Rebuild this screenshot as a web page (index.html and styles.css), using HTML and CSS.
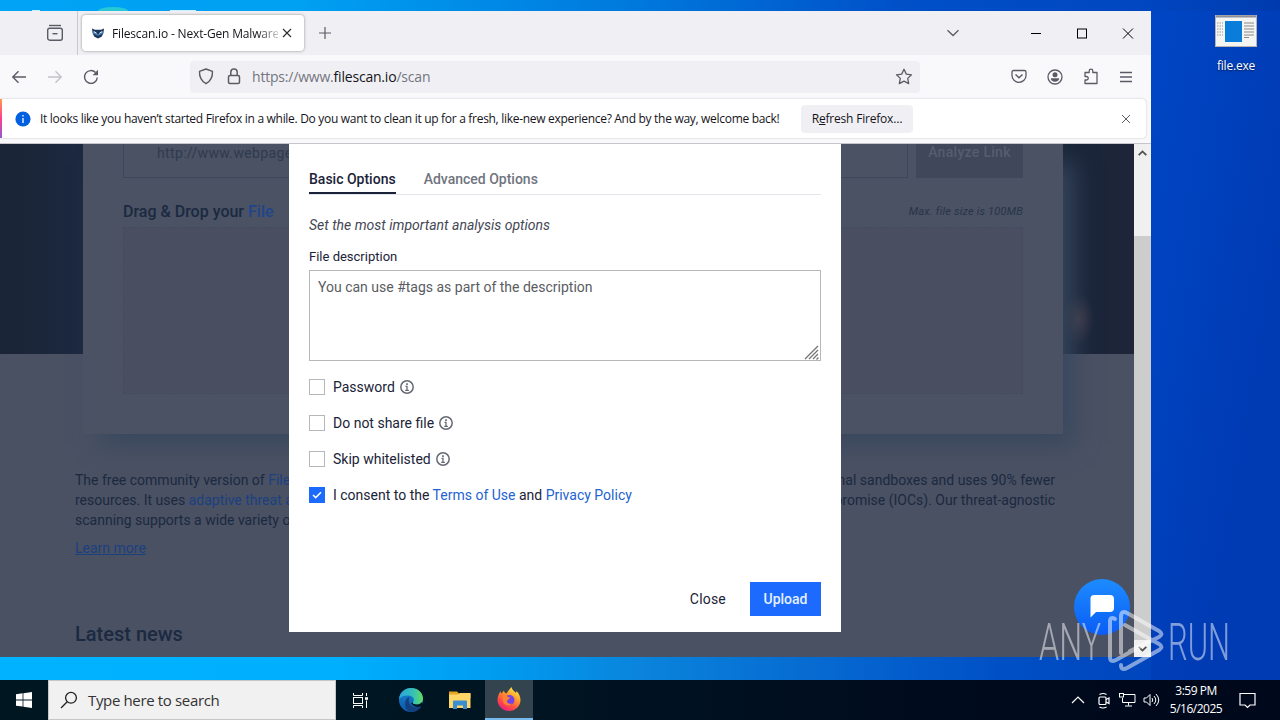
FILE: index.html
```html
<!DOCTYPE html>
<html lang="en">
<head>
    <meta charset="UTF-8">
    <meta name="viewport" content="width=device-width, initial-scale=1.0">
    <title>Filescan.io - Next-Gen Malware Analysis</title>
    <link rel="stylesheet" href="styles.css">
</head>
<body>
    <div class="desktop">
        <div class="peek peek-white"></div>
        <div class="peek peek-green"></div>
        <div class="peek peek-wide"></div>

        <div class="desktop-icon">
            <svg width="42" height="32" viewBox="0 0 42 32">
                <rect x="0.5" y="0.5" width="41" height="31" fill="#f4f4f2" stroke="#b9b4b0"/>
                <path d="M1 1.5h40" stroke="#8d8f98" stroke-width="2"/>
                <rect x="10" y="6" width="17" height="21" fill="#0a7ddb"/>
                <path d="M2 8h6M2 11h6M2 14h6M2 17h6M2 20h6" stroke="#9a9a9a" stroke-dasharray="1.5 1"/>
                <path d="M29 8h10M29 11h10M29 14h10M29 17h10M29 20h10M29 22.5h5" stroke="#8a8a8a"/>
            </svg>
            <span>file.exe</span>
        </div>

        <div class="window">
            <!-- Tab strip -->
            <div class="tab-bar">
                <div class="tab-view">
                    <svg width="18" height="18" viewBox="0 0 18 18" fill="none" stroke="#5b5b66" stroke-width="1.4">
                        <path d="M3 1.5h12"/>
                        <rect x="1.7" y="4.2" width="14.6" height="12" rx="2"/>
                        <path d="M6.5 9.7h5"/>
                    </svg>
                </div>
                <div class="tab">
                    <svg width="14" height="14" viewBox="0 0 14 14">
                        <path d="M1 2.5l3 1.3h6l3-1.3-.6 4.8-1.8 3.4L7 12.5l-3.6-1.8L1.6 7.3z" fill="#1d3557"/>
                        <path d="M1.6 4.5L7 8.5l5.4-4-.5 3L7 9.8 2.1 7.5z" fill="#4c86c6"/>
                        <path d="M3 5.6l2.6 1.6M11 5.6L8.4 7.2" stroke="#fff" stroke-width=".9"/>
                    </svg>
                    <span class="tab-title">Filescan.io - Next-Gen Malware</span>
                    <svg class="tab-close" width="10" height="10" viewBox="0 0 10 10" stroke="#2b2a33" stroke-width="1.1"><path d="M1 1l8 8M9 1l-8 8"/></svg>
                </div>
                <svg class="new-tab" width="14" height="14" viewBox="0 0 14 14" stroke="#5b5b66" stroke-width="1.2"><path d="M7 1v12M1 7h12"/></svg>
                <div class="window-buttons">
                    <svg class="tab-list" width="14" height="8" viewBox="0 0 14 8" fill="none" stroke="#5b5b66" stroke-width="1.3"><path d="M1.5 1.2L7 6.5l5.500-5.300"/></svg>
                    <svg width="46" height="11" viewBox="0 0 46 11" stroke="#000"><path d="M18 5.500h10"/></svg>
                    <svg width="46" height="11" viewBox="0 0 46 11" fill="none" stroke="#000"><rect x="18.500" y="1" width="9" height="9"/></svg>
                    <svg width="46" height="11" viewBox="0 0 46 11" stroke="#000"><path d="M18 .5l10 10M28 .5l-10 10"/></svg>
                </div>
            </div>

            <!-- Toolbar -->
            <div class="toolbar">
                <div class="nav-buttons">
                    <svg width="16" height="16" viewBox="0 0 16 16" fill="none" stroke="#5b5b66" stroke-width="1.4"><path d="M15 8H2M7.500 2.300L1.800 8l5.700 5.700"/></svg>
                    <svg width="16" height="16" viewBox="0 0 16 16" fill="none" stroke="#c3c3c9" stroke-width="1.400"><path d="M1 8h13M8.500 2.300L14.200 8l-5.700 5.700"/></svg>
                    <svg width="16" height="16" viewBox="0 0 16 16" fill="none" stroke="#5b5b66" stroke-width="1.400"><path d="M14.300 8.500A6.400 6.400 0 1 1 12.600 3.600"/><path d="M15 .8v5.400H9.600z" fill="#5b5b66" stroke="none"/></svg>
                </div>
                <div class="url-bar">
                    <svg width="16" height="17" viewBox="0 0 16 17" fill="none" stroke="#5b5b66" stroke-width="1.400"><path d="M8 1l6.500 2.300c.2 5.600-1.600 9.800-6.500 12.400C3.100 13.100 1.300 8.900 1.500 3.300z" stroke-linejoin="round"/></svg>
                    <svg width="14" height="17" viewBox="0 0 14 17" fill="none" stroke="#5b5b66" stroke-width="1.500"><rect x="1.500" y="7.500" width="11" height="8" rx="1.500"/><path d="M3.800 7.500V4.300a3.200 3.200 0 0 1 6.400 0v3.200"/></svg>
                    <span class="url">https://www.<b>filescan.io</b>/scan</span>
                    <svg width="18" height="17" viewBox="0 0 18 17" fill="none" stroke="#5b5b66" stroke-width="1.300" stroke-linejoin="round"><path d="M9 1.300l2.300 4.800 5.200.7-3.800 3.600 1 5.200L9 13.100l-4.700 2.500 1-5.200L1.500 6.800l5.200-.7z"/></svg>
                </div>
                <div class="tool-icons">
                    <svg width="16" height="15" viewBox="0 0 16 15" fill="none" stroke="#5b5b66" stroke-width="1.300"><path d="M2.500 1.500h11a1.500 1.500 0 0 1 1.500 1.500v3.500a7 6.800 0 0 1-14 0V3a1.500 1.500 0 0 1 1.500-1.500z"/><path d="M4.500 5.500L8 8.700l3.500-3.200" stroke-width="1.500"/></svg>
                    <svg width="16" height="16" viewBox="0 0 16 16" fill="none" stroke="#5b5b66" stroke-width="1.300"><circle cx="8" cy="8" r="7"/><circle cx="8" cy="5.700" r="2.500" fill="#5b5b66" stroke="none"/><path d="M3.800 9.300h8.400c0 2-1.800 3.500-4.200 3.500s-4.200-1.500-4.200-3.500z" fill="#5b5b66" stroke="none"/></svg>
                    <svg width="16" height="17" viewBox="0 0 16 17" fill="none" stroke="#5b5b66" stroke-width="1.300" stroke-linejoin="round"><path d="M2 6.500V4.500h4.200V3a1.800 1.800 0 0 1 3.600 0v1.500H14V15.500H2V12h1.500a1.500 1.500 0 0 0 0-3.500H2z"/></svg>
                    <svg width="14" height="12" viewBox="0 0 14 12" stroke="#5b5b66" stroke-width="1.300"><path d="M1 1.500h12M1 6h12M1 10.500h12"/></svg>
                </div>
            </div>

            <!-- Refresh notification -->
            <div class="notice">
                <svg width="16" height="16" viewBox="0 0 16 16"><circle cx="8" cy="8" r="7.600" fill="#0060df"/><path d="M8 7v5M8 4v1.600" stroke="#fff" stroke-width="1.300"/></svg>
                <span class="notice-text">It looks like you haven’t started Firefox in a while. Do you want to clean it up for a fresh, like-new experience? And by the way, welcome back!</span>
                <button class="notice-btn">R<u>e</u>fresh Firefox…</button>
                <svg class="notice-close" width="10" height="10" viewBox="0 0 10 10" stroke="#5b5b66"><path d="M1 1l8 8M9 1l-8 8"/></svg>
            </div>

            <!-- Web page -->
            <div class="viewport">
                <div class="page">
                    <div class="scan-card">
                        <div class="url-row">
                            <div class="link-input">http://www.webpage.com</div>
                            <div class="analyze-btn">Analyze Link</div>
                        </div>
                        <div class="drop-head">
                            <h2>Drag &amp; Drop your <span>File</span></h2>
                            <em>Max. file size is 100MB</em>
                        </div>
                        <div class="drop-zone"></div>
                    </div>
                    <div class="about">
                        <div class="about-row"><span class="about-first">The free community version of <a>Filescan.io</a></span><span class="about-end">traditional sandboxes and uses 90% fewer</span></div>
                        <div class="about-row"><span class="about-second">resources. It uses <a>adaptive threat analysis</a></span><span class="about-end2">Compromise (IOCs). Our threat-agnostic</span></div>
                        <div class="about-row"><span class="about-third">scanning supports a wide variety of files</span></div>
                        <a class="learn-more">Learn more</a>
                    </div>
                    <h3 class="news-title">Latest news</h3>
                </div>

                <div class="scrollbar">
                    <div class="scroll-btn"><svg width="9" height="6" viewBox="0 0 9 6" fill="none" stroke="#505050" stroke-width="1.800"><path d="M.7 5.200l3.800-3.800 3.800 3.800"/></svg></div>
                    <div class="scroll-thumb"></div>
                    <div class="scroll-btn"><svg width="9" height="6" viewBox="0 0 9 6" fill="none" stroke="#505050" stroke-width="1.800"><path d="M.7.8l3.800 3.800L8.300.8"/></svg></div>
                </div>

                <div class="chat-btn">
                    <svg width="26" height="26" viewBox="0 0 26 26"><path d="M5 2h16a4 4 0 0 1 4 4v9a4 4 0 0 1-4 4H7l-5.500 5.500V5.500A3.500 3.500 0 0 1 5 2z" fill="#fff"/></svg>
                </div>

                <!-- Upload options modal -->
                <div class="modal">
                    <div class="modal-tabs">
                        <div class="modal-tab active">Basic Options</div>
                        <div class="modal-tab second">Advanced Options</div>
                    </div>
                    <p class="hint">Set the most important analysis options</p>
                    <label class="field-label">File description</label>
                    <div class="description">
                        <span>You can use #tags as part of the description</span>
                        <svg width="15" height="15" viewBox="0 0 15 15" stroke="#777" stroke-width="1.400"><path d="M1 14L14 1M5 14l9-9M9 14l5-5M12.500 14.500l2-2"/></svg>
                    </div>
                    <div class="check-row">
                        <span class="box"></span><span class="t-password">Password</span>
                        <svg class="info" width="14" height="14" viewBox="0 0 14 14" fill="none" stroke="#666a73"><circle cx="7" cy="7" r="6.200" stroke-width="1.500"/><path d="M5.500 6.300H7v4M5.200 10.300h3.700" stroke-width="1.300"/><path d="M7 3.200v1.700" stroke-width="1.700"/></svg>
                    </div>
                    <div class="check-row">
                        <span class="box"></span><span class="t-share">Do not share file</span>
                        <svg class="info" width="14" height="14" viewBox="0 0 14 14" fill="none" stroke="#666a73"><circle cx="7" cy="7" r="6.200" stroke-width="1.500"/><path d="M5.500 6.300H7v4M5.200 10.300h3.700" stroke-width="1.300"/><path d="M7 3.200v1.700" stroke-width="1.700"/></svg>
                    </div>
                    <div class="check-row">
                        <span class="box"></span><span class="t-skip">Skip whitelisted</span>
                        <svg class="info" width="14" height="14" viewBox="0 0 14 14" fill="none" stroke="#666a73"><circle cx="7" cy="7" r="6.200" stroke-width="1.500"/><path d="M5.500 6.300H7v4M5.200 10.300h3.700" stroke-width="1.300"/><path d="M7 3.200v1.700" stroke-width="1.700"/></svg>
                    </div>
                    <div class="check-row">
                        <span class="box checked"><svg width="10" height="8" viewBox="0 0 10 8" fill="none" stroke="#fff" stroke-width="1.500"><path d="M1 4l2.700 2.600L9 1.200"/></svg></span>
                        <span class="t-consent">I consent to the <a>Terms of Use</a> and <a>Privacy Policy</a></span>
                    </div>
                    <div class="modal-actions">
                        <button class="btn-close">Close</button>
                        <button class="btn-upload">Upload</button>
                    </div>
                </div>
            </div>
        </div>

        <div class="watermark">
            <svg width="194" height="66" viewBox="0 0 194 66">
                <g fill="#fff" font-family="Roboto, sans-serif" font-weight="300" font-size="51">
                    <text x="1" y="53" textLength="62" lengthAdjust="spacingAndGlyphs">ANY</text>
                    <text x="130" y="53" textLength="62" lengthAdjust="spacingAndGlyphs">RUN</text>
                </g>
                <g fill="none" stroke="#fff" stroke-width="4" stroke-linejoin="round" stroke-linecap="round">
                    <path d="M77 12q-5-3-5 3v35q0 6 6 3l34-19"/>
                    <path d="M83 46V10q0-7 6-4l32 18q5 3 0 6L92 44"/>
                    <path d="M87 18l34 19q5 3 0 6L89 61q-6 3-6-3"/>
                </g>
            </svg>
        </div>

        <!-- Taskbar -->
        <div class="taskbar">
            <div class="start">
                <svg width="16" height="16" viewBox="0 0 16 16" fill="#fff"><path d="M0 2.200L6.600 1.300v6.200H0zM7.400 1.200L16 0v7.500H7.400zM0 8.400h6.600v6.200L0 13.700zM7.400 8.400H16V16l-8.600-1.200z"/></svg>
            </div>
            <div class="search">
                <svg width="18" height="18" viewBox="0 0 18 18" fill="none" stroke="#222" stroke-width="1.300"><circle cx="11" cy="6.800" r="5.400"/><path d="M7.200 10.800L1 17"/></svg>
                <span>Type here to search</span>
            </div>
            <div class="task task-view">
                <svg width="18" height="17" viewBox="0 0 18 17" fill="none" stroke="#fff"><path d="M1.500 1v2.500h9V1M1.500 16v-2.500h9V16"/><rect x="1.500" y="5.500" width="9" height="6"/><path d="M14.500 1v3M14.500 8.500V16" /><path d="M13 6.500h3" stroke-width="2.500"/></svg>
            </div>
            <div class="task">
                <svg width="24" height="24" viewBox="0 0 24 24">
                    <defs>
                        <linearGradient id="edge-top" x1="0" x2="1"><stop offset="0" stop-color="#2aa4dd"/><stop offset=".6" stop-color="#35c1b5"/><stop offset="1" stop-color="#64dc62"/></linearGradient>
                        <linearGradient id="edge-low" y1="0" y2="1" x2="0"><stop offset="0" stop-color="#1688d0"/><stop offset="1" stop-color="#0e57ab"/></linearGradient>
                    </defs>
                    <circle cx="12" cy="12" r="12" fill="url(#edge-low)"/>
                    <path d="M0 11C1 4 6 0 12 0c7 0 12 5 12 10.500 0 4-3 6-6.500 6-3 0-4-1-3.500-2 2.500-4-1-7-5-7-4 0-7 1-9 3.500z" fill="url(#edge-top)"/>
                    <path d="M10.500 9c-2 4 0 9 5 10 3 .5 5-.5 7-1.500-3 5-8 7-12 6C6 22 5 16 7 12c1-2 2-3 3.500-3z" fill="#15407f"/>
                    <path d="M14 14.500c-.5 1 .5 2 3.500 2 2 0 4-.8 5.400-2.300l1.100 2-1.500 2C17 20 13.500 18 12 15z" fill="#001722"/>
                </svg>
            </div>
            <div class="task">
                <svg width="22" height="20" viewBox="0 0 22 20">
                    <path d="M0 1.500h8l2 2h11.500V8H0z" fill="#e6a523"/>
                    <path d="M0 4.500h9l2-1.500h10.500v15H0z" fill="#ffd766"/>
                    <path d="M4 19v-7.500q0-1 1-1h12q1 0 1 1V19h-4v-3.500H8V19z" fill="#3b8ed0"/>
                </svg>
            </div>
            <div class="task task-active">
                <svg width="24" height="24" viewBox="0 0 24 24">
                    <defs>
                        <linearGradient id="fox" x1=".8" y1="0" x2=".2" y2="1"><stop offset="0" stop-color="#fff04f"/><stop offset=".35" stop-color="#ffa12b"/><stop offset=".7" stop-color="#ff4a45"/><stop offset="1" stop-color="#e5198a"/></linearGradient>
                    </defs>
                    <path d="M3.500 4c0 1 .3 2 1 2.500L7 3.500c0 1.500 1 2.500 2.500 3C11 4 13 2 14.500 0c.5 3 3 4 4.500 6l.5-2c2.500 2.500 4 6 4 9 0 6-5 11-11.500 11S.5 19 .5 13c0-4 1.500-6 3-9z" fill="url(#fox)"/>
                    <circle cx="12.500" cy="13" r="5" fill="#7542e5"/>
                    <path d="M5.500 9c2-1.500 4-1 5 .5 1 1 2 1 3 1-1 2-3 1.500-3.500 3.500-.3 2 2 3.500 5 2.500-2 3-7 2.500-8.500-.5-1-2-1-4.500-1-7z" fill="#ff8130"/>
                </svg>
            </div>
            <div class="tray">
                <svg width="14" height="8" viewBox="0 0 14 8" fill="none" stroke="#fff" stroke-width="1.200"><path d="M1 7l6-6 6 6"/></svg>
                <svg class="tray-cam" width="14" height="17" viewBox="0 0 14 17" fill="none" stroke="#fff" stroke-width="1.200"><rect x="2" y="5" width="7" height="7.500" rx="1"/><path d="M9 7.500l3-1.500v5.500L9 10M2.500 2.500q3.500-2 7 0M2.500 15q3.500 2 7 0"/></svg>
                <svg class="tray-net" width="17" height="14" viewBox="0 0 17 14" fill="none" stroke="#fff"><path d="M5 1.500h11v8H3.500V5M9.500 9.500v3M6 13h7"/><rect x=".5" y=".5" width="4" height="3.500"/></svg>
                <svg class="tray-vol" width="17" height="14" viewBox="0 0 17 14" fill="none" stroke="#fff"><path d="M1 5h2.500L7 1.500v11L3.500 9H1z"/><path d="M9 5q1.500 2 0 4M11 3q3.500 4 0 8M13 1q5.500 6 0 12"/></svg>
                <div class="clock"><span>3:59 PM</span><span>5/16/2025</span></div>
                <svg class="tray-note" width="17" height="17" viewBox="0 0 17 17" fill="none" stroke="#fff" stroke-width="1.200"><path d="M1 1.500h15v11.500h-5L8.500 15.500 6 13H1z"/></svg>
            </div>
        </div>
    </div>
</body>
</html>
```
FILE: styles.css
```css
:root {
    --ink: #1b2338;
    --blue: #1d6bfe;
    --link: #2463d1;
    --shade: #4a5163;
    --shade-ink: #1b2941;
    --shade-link: #1b4080;
    --ui: 'Open Sans', 'Noto Sans', sans-serif;
}

* {
    box-sizing: border-box;
}

body {
    margin: 0;
    font-family: Roboto, sans-serif;
    font-size: 14px;
    color: var(--ink);
}

button {
    border: 0;
    padding: 0;
    font: inherit;
    color: inherit;
    background: none;
}

svg {
    display: block;
    flex: none;
}

/* Desktop */
.desktop {
    position: relative;
    display: flex;
    flex-direction: column;
    justify-content: flex-end;
    width: 1280px;
    height: 720px;
    overflow: hidden;
    background:
        linear-gradient(90deg, #00a3f5 0, #00a0f3 300px, #0078dc 640px, #0050c8 900px, #0046c0 1150px, #003bae 1280px) 0 0 / 100% 11px no-repeat,
        linear-gradient(90deg, #00b2ff 0, #00b0ff 330px, #009bf0 500px, #0a84dc 640px, #0565cf 850px, #0050c5 1000px, #0045bd 1151px, transparent 1151px) 0 657px / 100% 23px no-repeat,
        linear-gradient(100deg, #0049c9 1100px, #003bb4 1300px);
}

.peek {
    position: absolute;
    top: 10px;
    left: 32px;
    width: 8px;
    height: 1px;
    background: #cdeeff;
}

.peek-green {
    top: 7px;
    left: 98px;
    width: 30px;
    height: 8px;
    border-radius: 50%;
    background: #27c7d4;
}

.peek-wide {
    left: 170px;
    width: 26px;
}

.desktop-icon {
    position: absolute;
    top: 15px;
    left: 1198px;
    width: 76px;
    display: flex;
    flex-direction: column;
    align-items: center;
    gap: 11px;
    font: 12px/16px var(--ui);
    letter-spacing: -0.2px;
    color: #fff;
    text-shadow: 0 1px 2px #001a55;
}

/* Browser window */
.window {
    position: absolute;
    top: 11px;
    left: 0;
    width: 1151px;
    height: 646px;
    display: flex;
    flex-direction: column;
    background: #f9f9fb;
    font-family: var(--ui);
}

.tab-bar {
    display: flex;
    align-items: center;
    height: 44px;
    background: #f0f0f4;
}

.tab-view {
    width: 78px;
    height: 44px;
    padding: 13px 0 0 46px;
    border-right: 1px solid #c8c8ce;
}

.tab {
    display: flex;
    align-items: center;
    width: 222px;
    height: 36px;
    margin-left: 4px;
    padding: 0 11px 0 9px;
    border-radius: 4px;
    background: #fff;
    box-shadow: 0 0 3px rgba(0, 0, 0, 0.4);
}

.tab-title {
    width: 166px;
    margin-left: 7px;
    overflow: hidden;
    white-space: nowrap;
    font-size: 12px;
    letter-spacing: -0.17px;
    color: #15141a;
    -webkit-mask-image: linear-gradient(90deg, #000 145px, transparent 172px);
    mask-image: linear-gradient(90deg, #000 145px, transparent 172px);
}

.tab-close {
    margin-left: 4px;
}

.new-tab {
    margin-left: 14px;
}

.window-buttons {
    display: flex;
    align-items: center;
    margin-left: auto;
}

.tab-list {
    margin-right: 53px;
}

.toolbar {
    display: flex;
    align-items: center;
    height: 43px;
}

.nav-buttons {
    display: flex;
    gap: 20px;
    width: 190px;
    padding-left: 11px;
}

.url-bar {
    display: flex;
    align-items: center;
    width: 730px;
    height: 32px;
    padding: 0 7px 0 8px;
    border-radius: 4px;
    background: #f0f0f4;
}

.url-bar svg + svg {
    margin-left: 13px;
}

.url {
    flex: 1;
    margin-left: 11px;
    font-size: 14px;
    letter-spacing: -0.2px;
    color: #74747e;
}

.url b {
    font-weight: normal;
    color: #15141a;
}

.tool-icons {
    display: flex;
    align-items: center;
    gap: 20px;
    margin-left: 91px;
}

.notice {
    display: flex;
    align-items: center;
    width: 1146px;
    height: 39px;
    margin-top: 1px;
    padding: 0 15px;
    background: linear-gradient(#ff9a4d, #ff3f8e 50%, #9059d6) 0 0 / 2px 100% no-repeat #fff;
    box-shadow: 0 0 2px rgba(0, 0, 0, 0.25);
    font-size: 12px;
    color: #15141a;
    border-radius: 0 4px 4px 0;
}

.notice-text {
    width: 743px;
    margin-left: 9px;
    white-space: nowrap;
    letter-spacing: -0.3px;
}

.notice-btn {
    width: 112px;
    height: 28px;
    margin-left: 18px;
    border-radius: 4px;
    background: #f0f0f4;
    letter-spacing: -0.2px;
}

.notice-close {
    margin-left: auto;
}

/* Page under the overlay */
.viewport {
    position: relative;
    display: flex;
    height: 514px;
    margin-top: auto;
    border-top: 1px solid #c6c6ca;
    font-family: Roboto, sans-serif;
}

.page {
    width: 1134px;
    overflow: hidden;
    color: var(--shade-ink);
    background:
        radial-gradient(ellipse 16px 26px at 1078px 175px, #413b49, transparent) 0 0 / 100% 210px no-repeat,
        linear-gradient(90deg, #1a2436 0, #1c2940 83px, #192539 1063px, #1e2539 1134px) 0 0 / 100% 210px no-repeat,
        var(--shade);
}

.scan-card {
    width: 980px;
    height: 290px;
    margin-left: 83px;
    padding: 0 40px;
    background: #4a5264;
    box-shadow: 14px 14px 24px -4px #38475e;
}

.url-row {
    display: flex;
    gap: 8px;
    height: 34px;
}

.link-input {
    width: 785px;
    padding: 1px 33px;
    border: 1px solid #3d465a;
    border-top: 0;
    letter-spacing: 0.35px;
    color: #303a4e;
}

.analyze-btn {
    width: 107px;
    text-align: center;
    font-weight: 500;
    letter-spacing: 0.3px;
    background: #40475a;
    color: #555d6e;
}

.drop-head {
    display: flex;
    justify-content: space-between;
    align-items: center;
    height: 49px;
    padding-top: 17px;
}

.drop-head h2 {
    margin: 0;
    font-size: 16px;
    font-weight: 500;
}

.drop-head h2 span {
    color: #20458a;
}

.drop-head em {
    font-size: 11px;
    letter-spacing: 0.2px;
    color: #28344a;
}

.drop-zone {
    height: 167px;
    border: 1px dashed #434c5f;
    background: #494f61;
}

.about {
    width: 980px;
    margin: 36px 0 0 75px;
    line-height: 20px;
}

.about a {
    color: var(--shade-link);
}

.about-row {
    display: flex;
    justify-content: space-between;
}

.about .learn-more {
    display: block;
    width: max-content;
    margin-top: 8px;
    text-decoration: underline;
}

.news-title {
    margin: 62px 0 0 75px;
    font-size: 20px;
    line-height: 28px;
    font-weight: 500;
}

.scrollbar {
    display: flex;
    flex-direction: column;
    width: 17px;
    background: #f0f0f0;
}

.scroll-btn {
    display: flex;
    align-items: center;
    justify-content: center;
    height: 17px;
    background: #f0f0f0;
}

.scroll-thumb {
    flex: 1;
    margin-top: 75px;
    background: #cdcdcd;
}

.chat-btn {
    position: absolute;
    top: 435px;
    left: 1074px;
    width: 56px;
    height: 56px;
    padding: 14px 0 0 15px;
    border-radius: 50%;
    background: linear-gradient(#1d8cff, #0a5cf5);
}

/* Modal */
.modal {
    position: absolute;
    top: 0;
    left: 289px;
    display: flex;
    flex-direction: column;
    width: 552px;
    height: 488px;
    padding: 17px 20px 16px;
    background: #fff;
}

.modal-tabs {
    display: flex;
    gap: 28px;
    height: 34px;
    border-bottom: 1px solid #e3e6ea;
    font-weight: 500;
    line-height: 36px;
    color: #70747e;
}

.modal-tab.active {
    height: 33px;
    border-bottom: 2px solid #1b2338;
    color: var(--ink);
}

.hint {
    margin: 20px 0 0;
    line-height: 20px;
    font-style: italic;
    color: #444855;
}

.field-label {
    margin-top: 14px;
    font-size: 13px;
    line-height: 16px;
}

.description {
    display: flex;
    justify-content: space-between;
    align-items: flex-end;
    height: 91px;
    margin: 5px 0 8px;
    padding: 6px 1px 0 8px;
    border: 1px solid #b7b7b7;
    color: #5a5c62;
}

.description span {
    align-self: flex-start;
    line-height: 20px;
}

.check-row {
    display: flex;
    align-items: center;
    height: 36px;
}

.check-row a {
    color: var(--link);
}

.box {
    display: flex;
    align-items: center;
    justify-content: center;
    width: 16px;
    height: 16px;
    margin-right: 8px;
    border: 1px solid #b5b7bd;
}

.box.checked {
    border: 0;
    background: var(--blue);
}

.info {
    margin-left: 5px;
}

.modal-actions {
    display: flex;
    justify-content: flex-end;
    align-items: center;
    gap: 24px;
    margin-top: auto;
    font-weight: 500;
}

.btn-close {
    font-weight: 400;
    letter-spacing: 0.2px;
}

.btn-upload {
    width: 71px;
    height: 34px;
    background: var(--blue);
    color: #e4f1ff;
}

.watermark {
    position: absolute;
    top: 607px;
    left: 1038px;
    opacity: 0.5;
}

/* Taskbar */
.taskbar {
    display: flex;
    align-items: center;
    height: 40px;
    background: linear-gradient(90deg, #001722, #001522 500px, #000a1d 1000px, #00081b);
    font-family: var(--ui);
    color: #fff;
}

.start {
    width: 48px;
    padding-left: 16px;
}

.search {
    display: flex;
    align-items: center;
    gap: 10px;
    width: 288px;
    height: 40px;
    padding-left: 11px;
    border: 1px solid #c4c8ca;
    background: #f1f1f1;
    font-size: 15px;
    letter-spacing: -0.35px;
    color: #333;
}

.task {
    display: flex;
    align-items: center;
    justify-content: center;
    width: 48px;
    height: 40px;
    margin-left: 1px;
}

.task-view {
    width: 50px;
    margin-left: 0;
}

.task-active {
    border-bottom: 2px solid #76b9ed;
    background: #34444e;
}

.tray {
    display: flex;
    align-items: center;
    height: 40px;
    margin-left: auto;
    padding-right: 24px;
}

.tray-cam {
    margin-left: 12px;
}

.tray-net {
    margin-left: 8px;
}

.tray-vol {
    margin-left: 7px;
}

.clock {
    display: flex;
    flex-direction: column;
    align-items: center;
    width: 64px;
    margin-left: 4px;
    font-size: 12px;
    line-height: 18px;
    letter-spacing: -0.5px;
}

.tray-note {
    margin-left: 11px;
}
```
